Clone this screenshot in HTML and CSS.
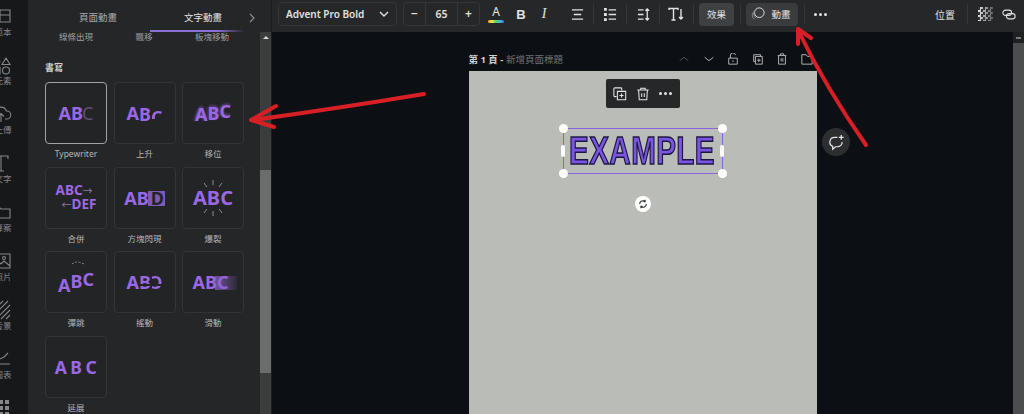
FILE: index.html
```html
<!DOCTYPE html>
<html lang="zh-Hant">
<head>
    <meta charset="UTF-8">
    <title>文字動畫</title>
    <link rel="stylesheet" href="styles.css">
</head>
<body>
    <div class="app">
        <nav class="rail">
            <div class="rail-inner">
                <div class="rail-item">
                    <svg class="icon" viewBox="0 0 20 20"><path d="M1 4h18v12H1zM9 4v12M9 9h10"/></svg>
                    <span>範本</span>
                </div>
                <div class="rail-item">
                    <svg class="icon" viewBox="0 0 20 20"><path d="M5.500 3l3.500 3.500L5.500 10 2 6.500zM15 3l4 6.500h-8zM2 12.500h7V19H2z"/><circle cx="15" cy="15.500" r="3.500"/></svg>
                    <span>元素</span>
                </div>
                <div class="rail-item">
                    <svg class="icon" viewBox="0 0 20 20"><path d="M6 15H4a3.500 3.500 0 0 1 0-7 6 6 0 0 1 11.500-1 4 4 0 0 1 .5 8h-2M10 18v-8M7 12.500l3-3 3 3"/></svg>
                    <span>上傳</span>
                </div>
                <div class="rail-item">
                    <svg class="icon" viewBox="0 0 20 20"><path d="M3 6V3h14v3M10 3v15M7 18h6"/></svg>
                    <span>文字</span>
                </div>
                <div class="rail-item">
                    <svg class="icon" viewBox="0 0 20 20"><path d="M1 5h7l2 2h9v9H1z"/></svg>
                    <span>專案</span>
                </div>
                <div class="rail-item">
                    <svg class="icon" viewBox="0 0 20 20"><path d="M1 3h18v14H1zM1 14l5-5 4 4 3-3 6 5"/><circle cx="13" cy="7" r="1.500"/></svg>
                    <span>照片</span>
                </div>
                <div class="rail-item">
                    <svg class="icon" viewBox="0 0 20 20"><path d="M1 7l6-6M1 12L12 1M1 17L17 1M5 19L19 5M10 19l9-9M15 19l4-4"/></svg>
                    <span>背景</span>
                </div>
                <div class="rail-item">
                    <svg class="icon" viewBox="0 0 20 20"><path d="M1 15h18M1 10l5-3 3 3 4-2 4-4"/></svg>
                    <span>圖表</span>
                </div>
                <div class="rail-item">
                    <svg class="icon icon-solid" viewBox="0 0 20 20"><path d="M2 2h4v4H2zM8 2h4v4H8zM14 2h4v4h-4zM2 8h4v4H2zM8 8h4v4H8zM14 8h4v4h-4zM2 14h4v4H2zM8 14h4v4H8zM14 14h4v4h-4z"/></svg>
                </div>
            </div>
        </nav>

        <aside class="panel">
            <div class="tabs">
                <div class="tab">頁面動畫</div>
                <div class="tab tab-active">文字動畫</div>
                <svg class="tab-next" viewBox="0 0 8 12"><path d="M2 2l4 4-4 4"/></svg>
            </div>
            <div class="panel-body">
                <div class="panel-scroll">
                    <div class="sub-row">
                        <span>線條出現</span>
                        <span>飄移</span>
                        <span>板塊移動</span>
                    </div>
                    <div class="section-title">書寫</div>
                    <div class="anim-grid">
                        <div class="anim">
                            <div class="card card-selected"><div class="abc">AB<span class="dim">C</span></div></div>
                            <div class="anim-name">Typewriter</div>
                        </div>
                        <div class="anim">
                            <div class="card"><div class="abc">A<span class="rise-b">B</span><span class="rise-c">C</span></div></div>
                            <div class="anim-name">上升</div>
                        </div>
                        <div class="anim">
                            <div class="card"><div class="abc abc-shift"><span class="shift-a">A</span>B<span class="shift-c">C</span></div></div>
                            <div class="anim-name">移位</div>
                        </div>
                        <div class="anim">
                            <div class="card">
                                <div class="merge">
                                    <div>ABC<span class="merge-arrow">→</span></div>
                                    <div class="merge-low"><span class="merge-arrow">←</span>DEF</div>
                                </div>
                            </div>
                            <div class="anim-name">合併</div>
                        </div>
                        <div class="anim">
                            <div class="card"><div class="abc">AB<span class="block-letter">D</span></div></div>
                            <div class="anim-name">方塊閃現</div>
                        </div>
                        <div class="anim">
                            <div class="card card-burst">
                                <svg class="sparks" viewBox="0 0 44 40"><path d="M13 5l3 4M22 2v5M31 5l-3 4M13 35l3-4M22 38v-5M31 35l-3-4"/></svg>
                                <div class="abc abc-big">ABC</div>
                            </div>
                            <div class="anim-name">爆裂</div>
                        </div>
                        <div class="anim">
                            <div class="card card-burst">
                                <svg class="hop" viewBox="0 0 44 40"><path d="M17 8q4-3 8-1.500t5 1.500" stroke-dasharray="2 1.500"/></svg>
                                <div class="abc"><span class="bounce-a">A</span><span class="bounce-b">B</span><span class="bounce-c">C</span></div>
                            </div>
                            <div class="anim-name">彈跳</div>
                        </div>
                        <div class="anim">
                            <div class="card"><div class="abc">A<span class="shake-b">B</span><span class="shake-c">C</span></div></div>
                            <div class="anim-name">搖動</div>
                        </div>
                        <div class="anim">
                            <div class="card"><div class="abc abc-slide">ABC<span class="slide-tail"></span></div></div>
                            <div class="anim-name">滑動</div>
                        </div>
                        <div class="anim">
                            <div class="card"><div class="abc abc-wide">ABC</div></div>
                            <div class="anim-name">延展</div>
                        </div>
                    </div>
                </div>
                <div class="scrollbar">
                    <div class="scroll-up"></div>
                    <div class="scroll-thumb"></div>
                </div>
            </div>
        </aside>

        <div class="workspace">
            <header class="toolbar">
                <div class="font-select">
                    <span>Advent Pro Bold</span>
                    <svg class="tool-icon chevron" viewBox="0 0 12 12"><path d="M2 4l4 4 4-4"/></svg>
                </div>
                <div class="size-group">
                    <div class="size-btn">−</div>
                    <div class="size-value">65</div>
                    <div class="size-btn">+</div>
                </div>
                <div class="color-a">
                    <span>A</span>
                    <div class="rainbow"></div>
                </div>
                <div class="tool tool-bold">B</div>
                <div class="tool tool-italic">I</div>
                <div class="tool tool-align">
                    <svg class="tool-icon" viewBox="0 0 14 14"><path d="M1 2h12M3 7h8M1 12h12"/></svg>
                </div>
                <div class="sep"></div>
                <div class="tool tool-list">
                    <svg class="tool-icon" viewBox="0 0 14 14"><path d="M5 2h8M5 7h8M5 12h8"/><path class="dots" d="M0 0h3v3H0zM0 5.500h3v3H0zM0 11h3v3H0z"/></svg>
                </div>
                <div class="sep"></div>
                <div class="tool tool-spacing">
                    <svg class="tool-icon" viewBox="0 0 14 14"><path d="M1 2h6M1 7h6M1 12h6M11 1v12M9 3l2-2 2 2M9 11l2 2 2-2"/></svg>
                </div>
                <div class="sep"></div>
                <div class="tool tool-tt">
                    <svg class="tool-icon" viewBox="0 0 16 14"><path d="M1 3V1.500h9V3M5.500 1.500V13M3.500 13h4M13 2v10M11 10l2 2 2-2"/></svg>
                </div>
                <div class="sep"></div>
                <div class="tool-btn tool-btn-effect">效果</div>
                <div class="sep sep-tight"></div>
                <div class="tool-btn tool-btn-anim">
                    <svg class="anim-icon" viewBox="0 0 16 16"><circle cx="9.500" cy="6.500" r="5.500"/><path class="faint" d="M5 3.500a5.500 5.500 0 0 0 1 9M3 5.500a5.500 5.500 0 0 0 1 8.500"/></svg>
                    <span>動畫</span>
                </div>
                <div class="sep sep-tight"></div>
                <div class="more"><i></i><i></i><i></i></div>
                <div class="tool-right">
                    <div class="position">位置</div>
                    <div class="sep sep-wide"></div>
                    <div class="checker"></div>
                    <svg class="tool-icon link-icon" viewBox="0 0 16 12"><rect x="1" y="1" width="10" height="6" rx="3"/><rect x="5" y="5" width="10" height="6" rx="3"/></svg>
                </div>
            </header>

            <div class="stage">
                <main class="canvas">
                    <div class="page-head">
                        <div class="page-title"><b>第 1 頁 -</b> <span>新增頁面標題</span></div>
                        <div class="page-tools">
                            <svg class="page-icon page-icon-dim" viewBox="0 0 14 14"><path d="M2 9l5-4 5 4"/></svg>
                            <svg class="page-icon" viewBox="0 0 14 14"><path d="M2 5l5 4 5-4"/></svg>
                            <svg class="page-icon" viewBox="0 0 14 14"><path d="M2 6h10v7H2zM4 6V3.500a3 3 0 0 1 6-1M7 8.500v2"/></svg>
                            <svg class="page-icon" viewBox="0 0 14 14"><path d="M4 10H2V2h8v2M4 4h8v9H4zM8 6.500v4M6 8.500h4"/></svg>
                            <svg class="page-icon" viewBox="0 0 14 14"><path d="M2 3h10M5 3V1h4v2M3 3v10h8V3M6 6v4M8 6v4"/></svg>
                            <svg class="page-icon" viewBox="0 0 14 14"><path d="M1 13V2h5l1.500 2H13v9z"/></svg>
                        </div>
                    </div>
                    <div class="page">
                        <div class="float-bar">
                            <svg class="float-icon" viewBox="0 0 16 16"><path d="M4 11H2a1 1 0 0 1-1-1V2a1 1 0 0 1 1-1h7a1 1 0 0 1 1 1v2M5 5h9.500v9.500H5zM9.800 7.500v4.500M7.500 9.800h4.500"/></svg>
                            <svg class="float-icon" viewBox="0 0 16 16"><path d="M1.500 3.500h13M5.500 3.500V1.500h5v2M3 3.500l.7 11h8.600l.7-11M6.500 7v4.500M9.500 7v4.500"/></svg>
                            <div class="more more-white"><i></i><i></i><i></i></div>
                        </div>
                        <div class="text-box">
                            <div class="example">EXAMPLE</div>
                            <i class="knob knob-tl"></i>
                            <i class="knob knob-tr"></i>
                            <i class="knob knob-bl"></i>
                            <i class="knob knob-br"></i>
                            <i class="grip grip-l"></i>
                            <i class="grip grip-r"></i>
                        </div>
                        <div class="rotate">
                            <svg viewBox="0 0 12 12"><path d="M2 6a4 4 0 0 1 6.500-3M10 6a4 4 0 0 1-6.500 3M8.500 1v2.200H6.500M3.500 11V8.800h2"/></svg>
                        </div>
                    </div>
                    <div class="comment">
                        <svg viewBox="0 0 18 18"><path d="M10 3.500H7a5 5 0 0 0-2 9.600V16l3-2.500h2a5 5 0 0 0 5-5M14 1v5M11.500 3.500h5"/></svg>
                    </div>
                </main>
                <div class="page-scroll">
                    <div class="page-scroll-up"></div>
                    <div class="page-scroll-thumb"></div>
                </div>
            </div>
        </div>

        <svg class="arrows" viewBox="0 0 1024 414">
            <path d="M424 94Q340 108 253 120M276 106L251 120L274 127"/>
            <path d="M866 145Q826 88 799 32M798 44L798 29L811 38"/>
        </svg>
    </div>
</body>
</html>
```

FILE: styles.css
```css
* {
    margin: 0;
    padding: 0;
    box-sizing: border-box;
}

body {
    width: 1024px;
    height: 414px;
    overflow: hidden;
    background-color: #0c1014;
    color: #d8d8d8;
    font-family: "Noto Sans", "Noto Sans CJK TC", sans-serif;
}

svg {
    fill: none;
    stroke: currentColor;
}

.app {
    position: relative;
    display: flex;
    height: 414px;
    overflow: hidden;
}

/* left rail */
.rail {
    width: 28px;
    flex: none;
    overflow: hidden;
    background-color: #17181a;
}

.rail-inner {
    width: 54px;
    margin-left: -26px;
    padding-top: 4px;
}

.rail-item {
    height: 49px;
    display: flex;
    flex-direction: column;
    align-items: center;
    color: #85868a;
}

.rail-item span {
    font-size: 8.5px;
    line-height: 12px;
    margin-left: 4px;
}

.icon {
    width: 22px;
    height: 20px;
    margin-top: 2px;
    stroke-width: 1.1;
}

.icon-solid {
    fill: currentColor;
    stroke: none;
}

/* animation panel */
.panel {
    width: 244px;
    flex: none;
    display: flex;
    flex-direction: column;
    background-color: #252627;
    border-right: 1px solid #1b1c1d;
}

.tabs {
    height: 32px;
    flex: none;
    display: flex;
    align-items: center;
    padding: 3px 0 0 17.5px;
    position: relative;
}

.tab {
    width: 105px;
    text-align: center;
    font-size: 9.5px;
    color: #a9aaab;
    margin-top: -1px;
}

.tab-active {
    color: #e4e4e4;
}

.tab-active::after {
    content: "";
    position: absolute;
    left: 122px;
    top: 30px;
    width: 95px;
    height: 2px;
    background: linear-gradient(90deg, #8b6fd8, #8b6fd8 70%, rgba(139, 111, 216, 0));
}

.tab-next {
    width: 8px;
    height: 12px;
    margin-left: -8px;
    color: #8a8b8c;
    stroke-width: 1.2;
}

.panel-body {
    flex: 1;
    display: flex;
    min-height: 0;
}

.panel-scroll {
    width: 233px;
    padding-left: 17px;
    overflow: hidden;
}

.sub-row {
    display: flex;
    height: 12px;
    font-size: 8.5px;
    line-height: 12px;
    color: #9d9e9f;
    margin: -1px 0 0 -3px;
}

.sub-row span {
    width: 68px;
    text-align: center;
    white-space: nowrap;
}

.section-title {
    margin-top: 18px;
    height: 14px;
    font-size: 9px;
    line-height: 14px;
    font-weight: 700;
    color: #d0d0d0;
}

.anim-grid {
    display: grid;
    grid-template-columns: repeat(3, 62px);
    column-gap: 6.5px;
    grid-auto-rows: 84.5px;
    margin-top: 7px;
}

.card {
    position: relative;
    height: 62px;
    display: flex;
    align-items: center;
    justify-content: center;
    border: 1px solid #333435;
    border-radius: 4px;
    background-color: #232425;
}

.card-selected {
    border: 1.5px solid #a2a3a4;
}

.anim-name {
    margin-top: 3px;
    font-size: 8.5px;
    line-height: 14px;
    text-align: center;
    color: #b4b5b6;
}

.abc {
    position: relative;
    font-size: 18px;
    line-height: 22px;
    font-weight: 700;
    color: #9a68e4;
    white-space: nowrap;
}

.dim {
    font-weight: 400;
    color: #5d4f78;
    margin-left: -1px;
}

.rise-b {
    display: inline-block;
    transform: translateY(1px);
}

.rise-c {
    display: inline-block;
    transform: translateY(4px);
    background: linear-gradient(#9a68e4 60%, transparent 60%);
    -webkit-background-clip: text;
    background-clip: text;
    color: transparent;
}

.abc-shift {
    text-shadow: 0 -2px 2px rgba(154, 104, 228, 0.35), -2px 0 2px rgba(154, 104, 228, 0.25);
}

.shift-a {
    display: inline-block;
    transform: translateY(1px);
}

.shift-c {
    display: inline-block;
    transform: translateY(-2px);
}

.merge {
    font-size: 13.5px;
    line-height: 13px;
    font-weight: 700;
    color: #9a68e4;
    white-space: nowrap;
}

.merge-low {
    margin-left: 6px;
}

.merge-arrow {
    font-weight: 400;
    color: #8b7aa8;
    font-size: 10px;
}

.block-letter {
    display: inline-block;
    width: 17px;
    height: 15px;
    margin-left: -1px;
    padding-left: 3px;
    line-height: 15px;
    background-color: #7c5bb4;
    color: #232425;
}

.abc-big {
    font-size: 20px;
}

.sparks,
.hop {
    position: absolute;
    left: 8px;
    top: 10px;
    width: 44px;
    height: 40px;
    color: #8c8c8e;
    stroke-width: 1;
}

.hop {
    top: 4px;
    left: 9px;
}

.bounce-a {
    display: inline-block;
    transform: translateY(3px);
}

.bounce-b {
    display: inline-block;
    transform: translateY(-1px);
}

.bounce-c {
    display: inline-block;
    transform: translateY(-3px);
}

.shake-b,
.shake-c {
    display: inline-block;
    background: linear-gradient(#9a68e4 58%, transparent 58%, transparent 66%, #9a68e4 66%);
    -webkit-background-clip: text;
    background-clip: text;
    color: transparent;
}

.shake-c {
    transform: scaleX(-1);
}

.abc-slide {
    margin-left: 4px;
}

.slide-tail {
    display: inline-block;
    width: 22px;
    height: 14px;
    margin-left: -13px;
    vertical-align: -1px;
    background: linear-gradient(90deg, rgba(138, 98, 204, 0.75), rgba(138, 98, 204, 0.1));
}

.abc-wide {
    letter-spacing: 3.5px;
    font-size: 17.5px;
    margin-right: -3px;
}

/* panel scrollbar */
.scrollbar {
    width: 11px;
    flex: none;
    background-color: #3b3c3c;
    position: relative;
}

.scroll-up {
    margin: 4px auto 0;
    width: 0;
    border-left: 3px solid transparent;
    border-right: 3px solid transparent;
    border-bottom: 3px solid #d8d8d8;
}

.scroll-thumb {
    width: 11px;
    height: 203px;
    margin-top: 131px;
    background-color: #6b6c6c;
}

/* main side */
.workspace {
    flex: 1;
    display: flex;
    flex-direction: column;
    min-width: 0;
}

.toolbar {
    height: 32px;
    flex: none;
    display: flex;
    align-items: center;
    padding: 0 8px 4px 6px;
    background-color: #262728;
    color: #e2e2e2;
    font-size: 10.5px;
}

.tool-icon {
    stroke-width: 1.4;
}

.font-select {
    width: 119px;
    height: 24px;
    flex: none;
    display: flex;
    align-items: center;
    justify-content: space-between;
    padding: 0 6px 0 7px;
    border: 1px solid #353637;
    border-radius: 4px;
    font-size: 10px;
    font-weight: 600;
}

.chevron {
    width: 12px;
    height: 12px;
}

.size-group {
    width: 77px;
    height: 24px;
    flex: none;
    display: flex;
    margin-left: 6px;
    border: 1px solid #353637;
    border-radius: 4px;
    line-height: 22px;
    text-align: center;
    font-weight: 600;
}

.size-btn {
    width: 21px;
    font-size: 12px;
}

.size-value {
    flex: 1;
    font-size: 10.5px;
    border-left: 1px solid #353637;
    border-right: 1px solid #353637;
}

.color-a {
    width: 16px;
    flex: none;
    margin-left: 8px;
    text-align: center;
    font-size: 12px;
    line-height: 14px;
}

.rainbow {
    height: 3px;
    margin-top: 1px;
    border-radius: 2px;
    background: linear-gradient(90deg, #f5a623, #f2e34b, #4bd36b, #3bb8ea, #6a5ce8);
}

.tool {
    flex: none;
    display: flex;
    align-items: center;
    justify-content: center;
}

.tool .tool-icon {
    width: 13px;
    height: 13px;
}

.tool-bold {
    width: 14px;
    margin-left: 10px;
    font: 700 13px "Liberation Sans", sans-serif;
}

.tool-italic {
    width: 14px;
    margin-left: 9px;
    font: italic 400 14px "Liberation Serif", serif;
}

.tool-align {
    width: 14px;
    margin-left: 19px;
}

.tool-list {
    width: 14px;
    margin-left: 9px;
}

.dots {
    fill: currentColor;
    stroke: none;
}

.tool-spacing {
    width: 14px;
    margin-left: 9px;
}

.tool-tt {
    width: 16px;
    margin-left: 8px;
}

.tool-tt .tool-icon {
    width: 16px;
    height: 14px;
}

.sep {
    width: 1px;
    height: 20px;
    flex: none;
    margin-left: 9px;
    background-color: #36373a;
}

.sep-tight {
    margin-left: 6px;
}

.sep-wide {
    margin-left: 12px;
}

.tool-btn {
    height: 23px;
    flex: none;
    display: flex;
    align-items: center;
    justify-content: center;
    margin-left: 5px;
    border-radius: 4px;
    background-color: #3f4042;
    font-size: 9.5px;
}

.tool-btn-effect {
    width: 35px;
}

.tool-btn-anim {
    width: 52px;
    margin-left: 5px;
    gap: 6px;
    padding-right: 2px;
    background-color: #3a3b3d;
}

.anim-icon {
    width: 14px;
    height: 14px;
    stroke-width: 1.1;
}

.faint {
    stroke: #8a8b8d;
}

.more {
    display: flex;
    gap: 2px;
    flex: none;
    margin-left: 9px;
}

.more i {
    width: 3px;
    height: 3px;
    border-radius: 50%;
    background-color: #e2e2e2;
}

.more-white {
    margin-left: 0;
}

.tool-right {
    margin-left: auto;
    display: flex;
    align-items: center;
}

.position {
    font-size: 10px;
}

.checker {
    width: 15px;
    height: 14px;
    margin-left: 10px;
    background:
        linear-gradient(90deg, rgba(38, 39, 40, 0), rgba(38, 39, 40, 0.7)),
        repeating-conic-gradient(#e2e2e2 0 25%, #37383a 0 50%) 0 0 / 5px 5px;
}

.link-icon {
    width: 14px;
    height: 11px;
    margin-left: 9px;
    stroke-width: 1.2;
}

/* canvas */
.stage {
    flex: 1;
    display: flex;
    min-height: 0;
}

.canvas {
    position: relative;
    flex: 1;
    display: flex;
    flex-direction: column;
    align-items: center;
    overflow: hidden;
    background-color: #0c1014;
}

.page-head {
    width: 348px;
    height: 39px;
    flex: none;
    display: flex;
    align-items: center;
    justify-content: space-between;
    padding-top: 14px;
}

.page-title {
    font-size: 9.5px;
    color: #6f7275;
    white-space: nowrap;
}

.page-title b {
    color: #cfd0d1;
}

.page-tools {
    display: flex;
    gap: 12.5px;
    margin-right: 4px;
    color: #b6b7b8;
}

.page-icon {
    width: 12px;
    height: 12px;
    stroke-width: 1.1;
}

.page-icon-dim {
    color: #55585b;
}

.page {
    width: 348px;
    flex: 1;
    display: flex;
    flex-direction: column;
    align-items: center;
    padding-top: 8px;
    background-color: #babcb8;
}

.float-bar {
    width: 74px;
    height: 29px;
    flex: none;
    display: flex;
    align-items: center;
    justify-content: center;
    gap: 9px;
    border-radius: 2px;
    background-color: #262729;
    color: #e6e6e6;
}

.float-icon {
    width: 14px;
    height: 14px;
    stroke-width: 1.2;
}

.text-box {
    position: relative;
    width: 160px;
    height: 46px;
    flex: none;
    margin-top: 20px;
    display: flex;
    align-items: center;
    justify-content: center;
    border: 1.5px solid #8a63e0;
}

.example {
    transform: scaleX(0.76);
    font: 700 39px/44px "Liberation Sans", sans-serif;
    letter-spacing: 0.5px;
    color: #7a55e2;
    -webkit-text-stroke: 1.5px #1b1540;
    white-space: nowrap;
}

.knob {
    position: absolute;
    width: 9px;
    height: 9px;
    border-radius: 50%;
    background-color: #fff;
}

.knob-tl {
    left: -5px;
    top: -5px;
}

.knob-tr {
    right: -5px;
    top: -5px;
}

.knob-bl {
    left: -5px;
    bottom: -5px;
}

.knob-br {
    right: -5px;
    bottom: -5px;
}

.grip {
    position: absolute;
    top: 15.500px;
    width: 4px;
    height: 12px;
    border-radius: 2px;
    background-color: #fff;
}

.grip-l {
    left: -2.500px;
}

.grip-r {
    right: -2.500px;
}

.rotate {
    width: 16px;
    height: 16px;
    flex: none;
    margin-top: 22px;
    padding: 3px;
    border-radius: 50%;
    background-color: #fff;
    color: #2a2a2c;
}

.rotate svg {
    display: block;
    width: 10px;
    height: 10px;
    stroke-width: 1.3;
}

.comment {
    position: absolute;
    left: 550px;
    top: 96px;
    width: 28px;
    height: 28px;
    display: flex;
    align-items: center;
    justify-content: center;
    border-radius: 50%;
    background-color: #2d2e30;
    color: #e8e8e8;
}

.comment svg {
    width: 17px;
    height: 17px;
    stroke-width: 1.3;
}

.page-scroll {
    width: 11px;
    flex: none;
    background-color: #1f2022;
}

.page-scroll-up {
    margin: 5px auto 0;
    width: 5px;
    height: 2px;
    background-color: #77787a;
}

.page-scroll-thumb {
    height: 375px;
    margin-top: 4px;
    background-color: #4c4d4e;
}

/* red annotation arrows */
.arrows {
    position: absolute;
    left: 0;
    top: 0;
    width: 1024px;
    height: 414px;
    stroke: #d91f26;
    stroke-width: 4;
    stroke-linecap: round;
    stroke-linejoin: round;
}
```
